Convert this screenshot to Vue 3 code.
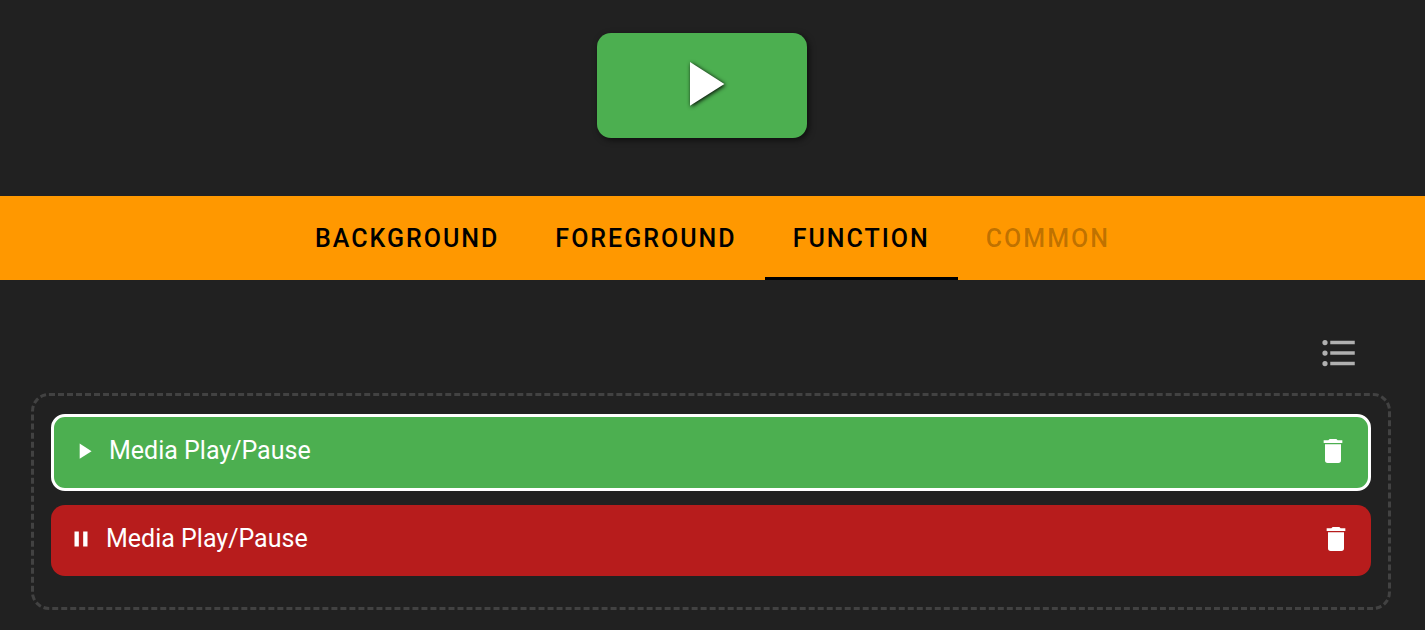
<script setup>
import { ref } from 'vue'

const tabs = [
  { id: 'background', label: 'Background' },
  { id: 'foreground', label: 'Foreground' },
  { id: 'function', label: 'Function' },
  { id: 'common', label: 'Common', disabled: true },
]
const activeTab = ref('function')

const icons = {
  play: 'M8,5.14V19.14L19,12.14L8,5.14Z',
  pause: 'M14,19H18V5H14M6,19H10V5H6V19Z',
  trash: 'M19,4H15.5L14.5,3H9.5L8.5,4H5V6H19M6,19A2,2 0 0,0 8,21H16A2,2 0 0,0 18,19V7H6V19Z',
  list: 'M7,5H21V7H7V5M7,13V11H21V13H7M4,4.5A1.5,1.5 0 0,1 5.5,6A1.5,1.5 0 0,1 4,7.5A1.5,1.5 0 0,1 2.5,6A1.5,1.5 0 0,1 4,4.5M4,10.5A1.5,1.5 0 0,1 5.5,12A1.5,1.5 0 0,1 4,13.5A1.5,1.5 0 0,1 2.5,12A1.5,1.5 0 0,1 4,10.5M7,19V17H21V19H7M4,16.5A1.5,1.5 0 0,1 5.5,18A1.5,1.5 0 0,1 4,19.5A1.5,1.5 0 0,1 2.5,18A1.5,1.5 0 0,1 4,16.5Z',
}

const actions = ref([
  { id: 1, icon: 'play', label: 'Media Play/Pause', color: 'green' },
  { id: 2, icon: 'pause', label: 'Media Play/Pause', color: 'red' },
])
const selected = ref(1)

function remove(id) {
  actions.value = actions.value.filter((a) => a.id !== id)
}
</script>

<template>
  <main class="page">
    <section class="preview">
      <button class="preview-button" type="button" aria-label="Play">
        <svg class="preview-icon" viewBox="0 0 24 24" aria-hidden="true"><path :d="icons.play" /></svg>
      </button>
    </section>

    <nav class="tabs" role="tablist">
      <button
        v-for="tab in tabs"
        :key="tab.id"
        class="tab"
        :class="{ active: activeTab === tab.id }"
        type="button"
        role="tab"
        :aria-selected="activeTab === tab.id"
        :disabled="tab.disabled"
        @click="activeTab = tab.id"
      >{{ tab.label }}</button>
    </nav>

    <section class="content">
      <div class="toolbar">
        <button class="icon-button" type="button" aria-label="List">
          <svg class="list-icon" viewBox="0 0 24 24" aria-hidden="true"><path :d="icons.list" /></svg>
        </button>
      </div>

      <ul class="actions">
        <li
          v-for="action in actions"
          :key="action.id"
          class="action"
          :class="[action.color, { selected: selected === action.id }]"
        >
          <button class="action-main" type="button" @click="selected = action.id">
            <svg class="action-icon" viewBox="0 0 24 24" aria-hidden="true"><path :d="icons[action.icon]" /></svg>
            <span>{{ action.label }}</span>
          </button>
          <button class="icon-button" type="button" aria-label="Delete" @click="remove(action.id)">
            <svg class="trash-icon" viewBox="0 0 24 24" aria-hidden="true"><path :d="icons.trash" /></svg>
          </button>
        </li>
      </ul>
    </section>
  </main>
</template>

<style>
body {
  margin: 0;
  background: #212121;
}
</style>

<style scoped>
.page {
  color: #fff;
  font-family: Roboto, "Liberation Sans", sans-serif;
  font-size: 25px;
  line-height: 36px;
}

button {
  margin: 0;
  padding: 0;
  border: 0;
  background: none;
  color: inherit;
  font: inherit;
  cursor: pointer;
}

svg {
  display: block;
  fill: currentColor;
}

.preview {
  display: flex;
  justify-content: center;
  padding: 33px 21px 58px 0;
}

.preview-button {
  box-sizing: border-box;
  display: flex;
  align-items: center;
  justify-content: center;
  width: 210px;
  height: 105px;
  padding-bottom: 4px;
  border-radius: 14px;
  background: #4caf50;
  box-shadow: 2px 2px 6px rgba(0, 0, 0, 0.6);
}

.preview-icon {
  width: 75px;
  height: 75px;
  filter: drop-shadow(1px 1px 2px #000);
}

.tabs {
  display: flex;
  justify-content: center;
  height: 84px;
  background: #ff9800;
}

.tab {
  box-sizing: border-box;
  padding: 5px 28px 0;
  border-bottom: 3px solid transparent;
  color: #000;
  font-weight: 500;
  letter-spacing: 2px;
  text-transform: uppercase;
}

.tab.active {
  border-bottom-color: #000;
}

.tab:disabled {
  color: rgba(0, 0, 0, 0.26);
  cursor: default;
}

.content {
  padding: 52px 34px 20px 31px;
}

.toolbar {
  display: flex;
  justify-content: flex-end;
  padding: 0 31px 19px 0;
  color: #b0b0b0;
}

.list-icon {
  width: 42px;
  height: 42px;
}

.actions {
  display: flex;
  flex-direction: column;
  gap: 14px;
  margin: 0;
  padding: 18px 17px 31px;
  border: 3px dashed #424242;
  border-radius: 18px;
  list-style: none;
}

.action {
  display: flex;
  align-items: center;
  padding-right: 19px;
  border-radius: 14px;
}

.action.selected {
  border: 3px solid #fff;
}

.green {
  background: #4caf50;
}

.red {
  background: #b71c1c;
}

.action-main {
  display: flex;
  flex: 1;
  align-items: center;
  gap: 12px;
  padding: 16px 0 19px 17px;
  text-align: left;
}

.action-icon {
  width: 26px;
  height: 26px;
}

.trash-icon {
  width: 32px;
  height: 32px;
  padding-bottom: 3px;
}
</style>
